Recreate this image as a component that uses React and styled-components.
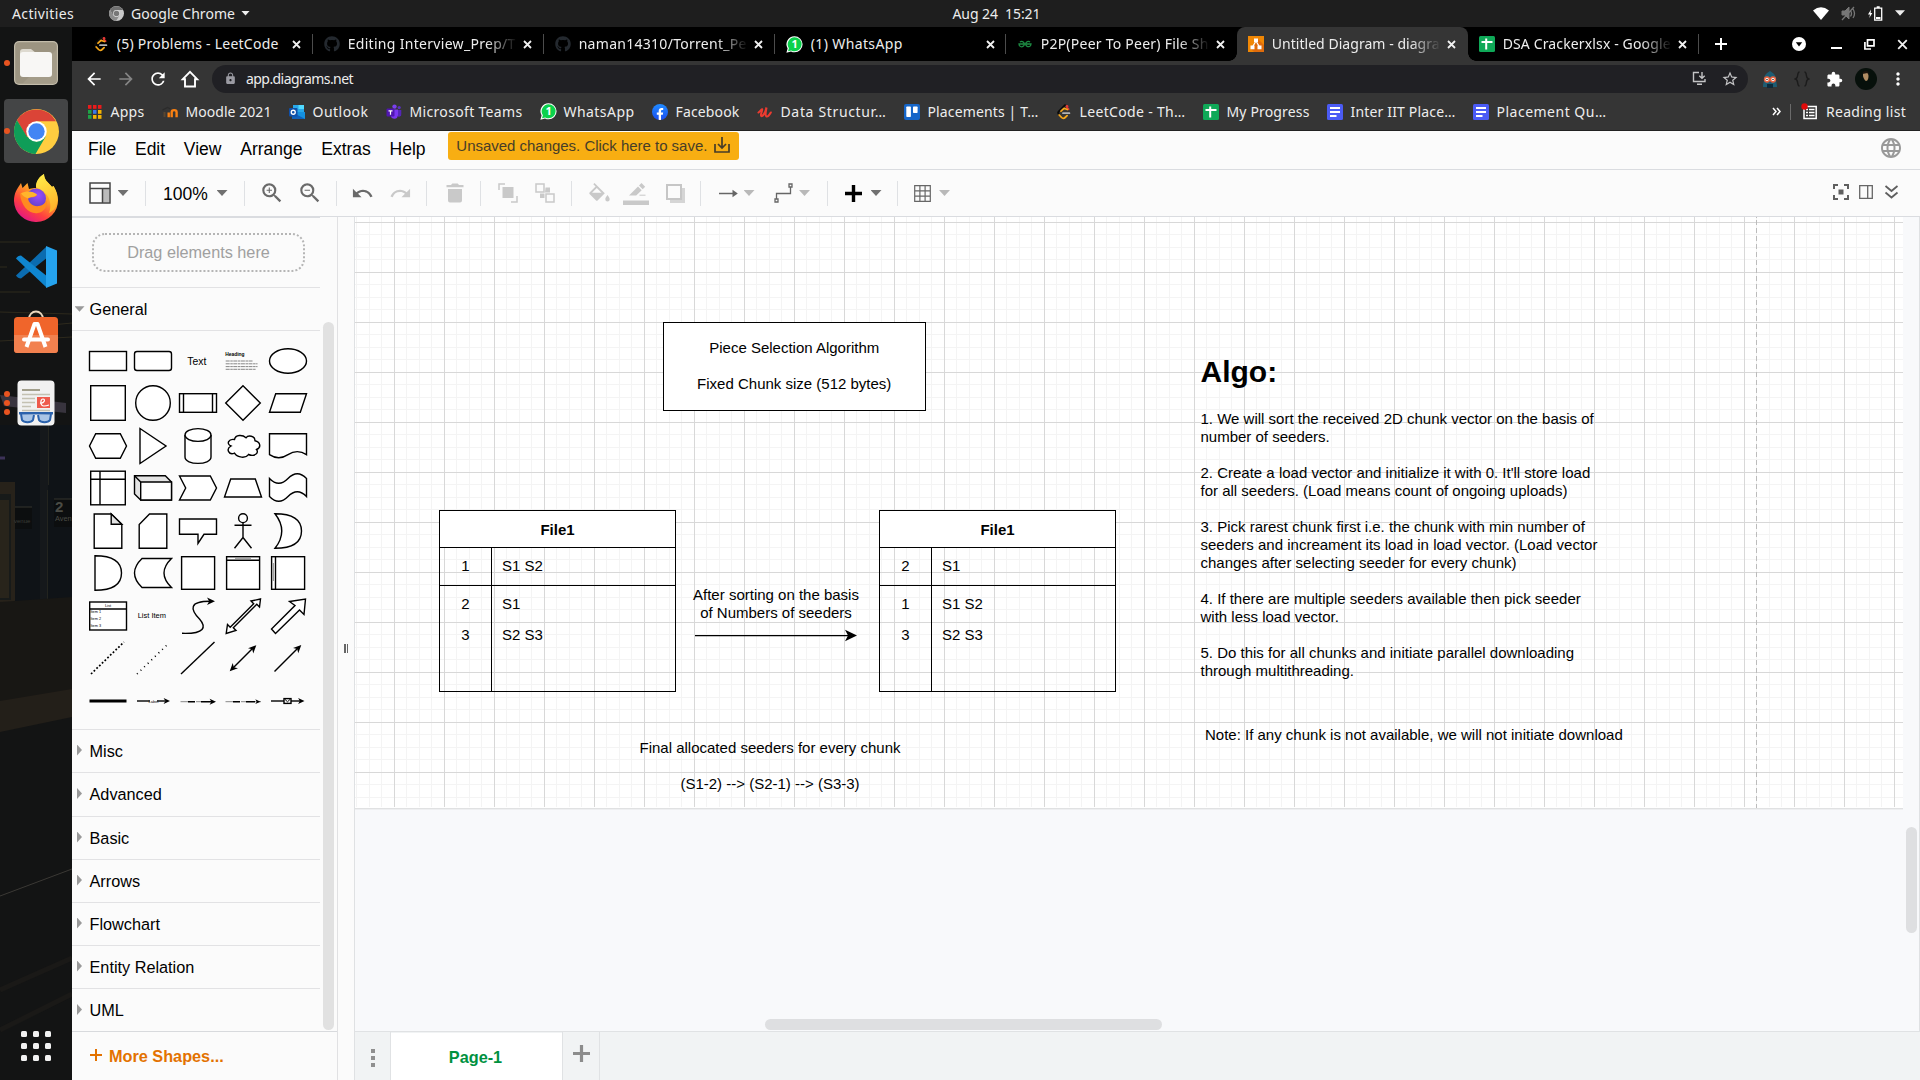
import React, { useLayoutEffect, useRef } from "react";
import styled, { createGlobalStyle, css } from "styled-components";
import { FaGithub, FaFacebookF } from "react-icons/fa";
import {
  MdZoomIn,
  MdZoomOut,
  MdUndo,
  MdRedo,
  MdLock,
  MdStarBorder,
  MdExtension,
  MdMoreVert,
  MdArrowBack,
  MdArrowForward,
  MdRefresh,
  MdLanguage,
} from "react-icons/md";

const Global = createGlobalStyle`
  * { box-sizing: border-box; }
  body { margin: 0; background: #131313; overflow: hidden; }
  svg { display: block; flex: none; }
`;

const uiFont = `"Noto Sans", "Open Sans", sans-serif`;
const appFont = `"Liberation Sans", Arial, sans-serif`;

/* ---------- shared ---------- */

const LabelBox = styled.span`
  flex: none;
  overflow: visible;
  white-space: pre;
  width: ${(p) => p.$w}px;
`;

function Label({ w, children }) {
  const ref = useRef(null);
  useLayoutEffect(() => {
    const el = ref.current;
    el.style.letterSpacing = "0px";
    const natural = el.getBoundingClientRect().width;
    el.style.letterSpacing = `${(w - natural) / children.length}px`;
  }, [w, children]);
  return (
    <LabelBox $w={w}>
      <span ref={ref}>{children}</span>
    </LabelBox>
  );
}

const Caret = styled.i`
  flex: none;
  width: ${(p) => p.$s || 11}px;
  height: ${(p) => (p.$s || 11) / 2 + 0.5}px;
  background: ${(p) => p.$c || "#707070"};
  clip-path: polygon(0 0, 100% 0, 50% 100%);
  margin-left: ${(p) => p.$ml || 0}px;
`;

/* ---------- desktop ---------- */

const Desktop = styled.div`
  width: 1920px;
  height: 1080px;
  display: flex;
  flex-direction: column;
  overflow: hidden;
  font-family: ${uiFont};
`;

const TopBar = styled.header`
  height: 27px;
  flex: none;
  background: #1e1e1e;
  color: #ececec;
  font-size: 14px;
  display: grid;
  grid-template-columns: 952.5px 1fr auto;
  align-items: center;
  line-height: 25px;
  padding-bottom: 1px;
`;
const TopLeft = styled.div`
  display: flex;
  align-items: center;
  padding-left: 12px;
`;
const TopGap = styled.span`
  width: ${(p) => p.$w}px;
  flex: none;
`;
const Tray = styled.div`
  display: flex;
  align-items: center;
  gap: 12px;
  padding-right: 15px;
`;

const Below = styled.div`
  display: flex;
  flex: 1;
  min-height: 0;
`;

const Dock = styled.nav`
  width: 72px;
  flex: none;
  position: relative;
  display: flex;
  flex-direction: column;
  align-items: center;
  gap: 4px;
  padding-top: 4px;
  background: #131414;
`;
const Wallpaper = styled.svg`
  position: absolute;
  inset: 0;
`;
const Slot = styled.div`
  position: relative;
  width: 64px;
  height: 64px;
  flex: none;
  display: grid;
  place-items: center;
  border-radius: 4px;
  padding-bottom: ${(p) => p.$lift || 0}px;
  background: ${(p) => (p.$active ? "#444546" : "transparent")};
`;
const Dots = styled.div`
  position: absolute;
  left: 0;
  top: 0;
  bottom: 0;
  display: flex;
  flex-direction: column;
  justify-content: center;
  gap: 3px;
`;
const Dot = styled.i`
  width: 6px;
  height: 6px;
  border-radius: 50%;
  background: #e95420;
`;
const AppsGrid = styled.div`
  position: relative;
  margin-top: auto;
  margin-bottom: 19px;
  display: grid;
  grid-template-columns: repeat(3, 6px);
  grid-auto-rows: 6px;
  gap: 6px;
`;
const AppsDot = styled.i`
  border-radius: 1.5px;
  background: #f2f2f2;
`;

/* ---------- chrome ---------- */

const Window = styled.main`
  flex: 1;
  min-width: 0;
  display: flex;
  flex-direction: column;
  color: #ededed;
`;
const TabStrip = styled.div`
  height: 34px;
  flex: none;
  background: #000;
  display: flex;
  padding-left: 9.7px;
  font-size: 14px;
  line-height: 34px;
`;
const flare = (side) => css`
  content: "";
  position: absolute;
  bottom: 0;
  ${side}: -8px;
  width: 8px;
  height: 8px;
  background: radial-gradient(circle at ${side} top, #000 7.5px, #353535 8px);
`;
const TabBox = styled.div`
  position: relative;
  width: 231px;
  flex: none;
  display: flex;
  align-items: center;
  padding-left: 11.5px;
  ${(p) =>
    p.$active &&
    css`
      background: #353535;
      border-radius: 8px 8px 0 0;
      &::before {
        ${flare("left")}
      }
      &::after {
        ${flare("right")}
      }
    `}
`;
const TabText = styled.div`
  margin-left: 7.5px;
  width: 170px;
  margin-right: 5.5px;
  height: 34px;
  overflow: hidden;
  ${(p) => p.$fade && "mask-image: linear-gradient(90deg, #000 138px, transparent 169px);"}
`;
const TabEdge = styled.i`
  margin-left: auto;
  width: 1px;
  height: 20px;
  background: #4c4c4c;
`;
const StripGap = styled.span`
  width: ${(p) => p.$w}px;
  flex: none;
`;
const StripIcons = styled.div`
  flex: 1;
  display: flex;
  align-items: center;
`;
const Toolbar = styled.div`
  height: 36px;
  flex: none;
  background: #353535;
  display: flex;
  align-items: center;
  padding-left: 12px;
  font-size: 14px;
`;
const NavIcons = styled.div`
  display: flex;
  gap: 12px;
`;
const Omnibox = styled.div`
  margin-left: 12px;
  width: 1536px;
  height: 28px;
  border-radius: 14px;
  background: #202024;
  display: flex;
  align-items: center;
  padding: 0 9px 1px 12px;
  gap: 9px;
  line-height: 26px;
`;
const OmniRight = styled.div`
  margin-left: auto;
  display: flex;
  align-items: center;
  gap: 14px;
  color: #c4c4c6;
`;
const ExtIcons = styled.div`
  display: flex;
  align-items: center;
  margin-left: 13px;
`;
const ExtSlot = styled.div`
  width: 32px;
  display: grid;
  place-items: center;
  margin-left: ${(p) => p.$ml || 0}px;
`;
const Bookmarks = styled.div`
  height: 34px;
  flex: none;
  background: #353535;
  border-bottom: 1px solid #222;
  display: flex;
  align-items: center;
  gap: 17px;
  padding: 0 14px 4px 14.5px;
  font-size: 14px;
`;
const Bookmark = styled.div`
  display: flex;
  align-items: center;
  gap: 8px;
  line-height: 26px;
`;
const BookmarkEnd = styled.div`
  margin-left: auto;
  display: flex;
  align-items: center;
`;
const BarEdge = styled.i`
  width: 1px;
  height: 16px;
  background: #6b6b6b;
  margin: 0 10px 0 9px;
`;

/* ---------- editor ---------- */

const Editor = styled.section`
  flex: 1;
  min-height: 0;
  display: flex;
  flex-direction: column;
  background: #fbfbfb;
  color: #000;
  font-family: ${appFont};
`;
const MenuBar = styled.div`
  height: 39px;
  flex: none;
  border-bottom: 1px solid #dadce0;
  display: flex;
  align-items: center;
  padding: 0 17px 2px 16px;
  font-size: 17.5px;
`;
const MenuItem = styled.span`
  margin-right: 18.75px;
`;
const SaveBanner = styled.div`
  align-self: flex-start;
  margin: 1px 0 0 4px;
  width: 291px;
  height: 28px;
  border-radius: 3px;
  background: #f8ae12;
  color: #473d28;
  font-size: 15px;
  display: flex;
  align-items: center;
  padding: 0 0 2px 8px;
  gap: 7px;
`;
const GlobeSlot = styled.span`
  margin-left: auto;
  margin-top: -2px;
  color: #999;
`;
const ToolRow = styled.div`
  height: 47px;
  flex: none;
  border-bottom: 1px solid #dadce0;
  display: flex;
  align-items: center;
  padding-right: 21.5px;
`;
const Sep = styled.i`
  flex: none;
  width: 1px;
  height: 25px;
  background: #dfe1e4;
  margin-left: ${(p) => p.$ml}px;
`;
const Tool = styled.span`
  flex: none;
  width: ${(p) => p.$w}px;
  margin-left: ${(p) => p.$ml}px;
  color: ${(p) => (p.$off ? "#c9c9c9" : "#6a6a6a")};
`;
const ZoomText = styled.span`
  flex: none;
  width: 46px;
  margin-left: 17px;
  margin-top: 2px;
  font-size: 17.5px;
`;
const ToolEnd = styled.div`
  margin-left: auto;
  display: flex;
  align-items: center;
  gap: 10.5px;
  padding-bottom: 2px;
`;
const Work = styled.div`
  flex: 1;
  min-height: 0;
  display: flex;
`;
const Sidebar = styled.aside`
  width: 266px;
  flex: none;
  border-right: 1px solid #e1e1e3;
  display: flex;
  flex-direction: column;
`;
const SideScroll = styled.div`
  height: 814px;
  display: flex;
  font-size: 16.25px;
`;
const SideList = styled.div`
  width: 248px;
  flex: none;
`;
const ScrollTrack = styled.div`
  padding: 105px 0 1px 3px;
  display: flex;
`;
const ScrollThumb = styled.i`
  width: 11px;
  border-radius: 6px;
  background: #e1e1e1;
`;
const DropZone = styled.div`
  height: 71px;
  border-top: 1px solid #dadce0;
  border-bottom: 1px solid #e2e2e4;
  padding: 15px 15px 0 20px;
`;
const DropBox = styled.div`
  height: 39px;
  border: 2px dotted #b5b5b5;
  border-radius: 13px;
  color: #a0a0a0;
  display: grid;
  place-items: center;
  line-height: 32px;
  padding-bottom: 2px;
`;
const Section = styled.div`
  height: ${(p) => p.$h}px;
  border-bottom: ${(p) => (p.$last ? "none" : "1px solid #e2e2e4")};
  display: flex;
  align-items: center;
  padding-left: ${(p) => (p.$open ? 2.5 : 5)}px;
  gap: ${(p) => (p.$open ? 5 : 7.5)}px;
`;
const SideArrow = styled.i`
  width: 5px;
  height: 11px;
  background: #999;
  clip-path: polygon(0 0, 100% 50%, 0 100%);
  margin-top: -2px;
`;
const Palette = styled.div`
  height: 399px;
  border-bottom: 1px solid #e2e2e4;
  padding: 8.4px 0 0 13.3px;
  display: grid;
  grid-template-columns: repeat(5, 45px);
  grid-auto-rows: 42.5px;
  place-items: center;
  align-content: start;
  justify-content: start;
`;
const MoreShapes = styled.div`
  flex: 1;
  border-top: 1px solid #d8dadd;
  display: flex;
  align-items: center;
  padding-left: 18px;
  gap: 7px;
  color: #e37200;
  font-size: 16.25px;
  font-weight: bold;
  line-height: 49px;
`;
const PlusSlot = styled.span`
  margin-top: -3px;
`;
const Splitter = styled.div`
  width: 17px;
  flex: none;
  border-right: 1px solid #dfe1e3;
  display: flex;
  align-items: center;
  justify-content: center;
  gap: 1px;
`;
const Grip = styled.i`
  width: 1.5px;
  height: 9px;
  background: #666;
`;
const Stage = styled.div`
  flex: 1;
  min-width: 0;
  display: flex;
  flex-direction: column;
`;
const Canvas = styled.div`
  position: relative;
  height: 814px;
  flex: none;
  background: #f8f9fb;
  border-right: 1px solid #dfe1e3;
`;
const gridStops = `
  #d8d8d8 0 1px, transparent 1px 12px,
  #f4f4f4 12px 13px, transparent 13px 25px,
  #f4f4f4 25px 26px, transparent 26px 37px,
  #f4f4f4 37px 38px, transparent 38px 50px`;
const Page = styled.div`
  width: 1548px;
  height: 590px;
  background-color: #fff;
  background-image: linear-gradient(#d8d8d8 0 1px, transparent 1px),
    linear-gradient(90deg, ${gridStops}), linear-gradient(${gridStops});
  background-size: 50px 50px;
  background-position: 39px 5px;
  box-shadow: 0 1px 0 #fff, 0 2px 0 #e0e1e2, 0 3px 0 #eeeff1;
`;
const PageBreak = styled.div`
  position: absolute;
  left: 1401px;
  top: 0;
  width: 1px;
  height: 591px;
  background: repeating-linear-gradient(#bcbcbc 0 5px, transparent 5px 8px);
  background-position: 0 3px;
`;
const VThumb = styled.i`
  position: absolute;
  right: 2px;
  top: 610px;
  width: 11px;
  height: 106px;
  border-radius: 6px;
  background: #dedfe1;
`;
const HThumb = styled.i`
  position: absolute;
  left: 410px;
  top: 802px;
  width: 397px;
  height: 11px;
  border-radius: 6px;
  background: #dedfe1;
`;
const Node = styled.div`
  position: absolute;
  left: ${(p) => p.$x}px;
  top: ${(p) => p.$y}px;
  width: ${(p) => p.$w}px;
  font-size: 15px;
  line-height: 18px;
  text-align: ${(p) => p.$align || "left"};
  white-space: pre;
`;
const BoxNode = styled(Node)`
  height: 89px;
  border: 1.25px solid #000;
  background: #fff;
  padding-top: 16px;
`;
const AlgoTitle = styled.h1`
  margin: 0 0 20px;
  font-size: 30px;
  line-height: 36px;
`;
const TableNode = styled.div`
  position: absolute;
  left: ${(p) => p.$x}px;
  top: 293px;
  width: 237px;
  height: 182px;
  border: 1.25px solid #000;
  font-size: 15px;
  line-height: 18px;
  display: flex;
  flex-direction: column;
`;
const TableHead = styled.div`
  height: 37px;
  flex: none;
  background: #fff;
  border-bottom: 1px solid #000;
  font-weight: bold;
  text-align: center;
  line-height: 38px;
`;
const TableRow = styled.div`
  display: grid;
  grid-template-columns: 52px 1fr;
  height: ${(p) => p.$h}px;
  flex: none;
  border-bottom: ${(p) => (p.$line ? "1px solid #000" : "none")};
`;
const KeyCell = styled.div`
  border-right: 1px solid #000;
  text-align: center;
  padding-top: ${(p) => p.$pt}px;
`;
const ValueCell = styled.div`
  padding: ${(p) => p.$pt}px 0 0 10px;
`;
const ArrowNode = styled.svg`
  position: absolute;
  left: 339px;
  top: 410px;
`;
const PageTabs = styled.div`
  flex: 1;
  background: #f1f3f4;
  border-top: 1px solid #e0e2e4;
  display: flex;
`;
const PageMenu = styled.div`
  width: 36px;
  border-right: 1px solid #e0e2e4;
  display: flex;
  flex-direction: column;
  align-items: center;
  gap: 3px;
  padding-top: 17px;
`;
const MenuDot = styled.i`
  width: 4px;
  height: 4px;
  background: #8f8f8f;
`;
const PageTab = styled.div`
  width: 171px;
  margin-top: 1px;
  background: #fff;
  color: #00913f;
  font-weight: bold;
  font-size: 16.25px;
  line-height: 49px;
  text-align: center;
  padding-right: 2px;
`;
const AddPage = styled.div`
  width: 38px;
  border-left: 1px solid #e0e2e4;
  border-right: 1px solid #e0e2e4;
  padding: 13px 0 0 9.5px;
`;

/* ---------- icon drawings ---------- */

const LeetIcon = () => (
  <svg width="16" height="16" viewBox="0 0 16 16" fill="none" strokeWidth="1.8" strokeLinecap="round">
    <path d="M9 1.2 2.8 7.4c-.8.9-.8 2 0 2.9" stroke="#0a0a0a" />
    <path d="M12.6 5.2 11 3.8" stroke="#e53935" />
    <circle cx="11" cy="2.4" r="1.4" fill="#e53935" />
    <path d="M5 7.2 8 4.4M3.2 11l2.4 2.5c1 1 2.5 1 3.5 0l2-1.8M8.5 4.5l2.8 1" stroke="#f7a81b" />
    <path d="M7 9.2h6.4" stroke="#b3b3b3" />
  </svg>
);
const GitIcon = () => <FaGithub size={16} color="#24292f" />;
const WhatsIcon = () => (
  <svg width="17" height="17" viewBox="0 0 17 17">
    <path d="M8.6.3a8 8 0 0 1 0 16c-1.3 0-2.5-.3-3.6-.9L.4 16.7l1.2-4.3A8 8 0 0 1 8.6 .3z" fill="#fff" />
    <path d="M8.6 1.3a7 7 0 0 1 0 14c-1.3 0-2.4-.3-3.4-.9l-3.2.9.9-3.1A7 7 0 0 1 8.6 1.3z" fill="#0bd14c" />
    <text x="8.6" y="12.3" textAnchor="middle" fontSize="11" fontWeight="700" fontFamily="Noto Sans" fill="#fff">1</text>
  </svg>
);
const GfgIcon = () => (
  <svg width="16" height="16" viewBox="0 0 16 16" fill="none" stroke="#1c8a42" strokeWidth="1.3">
    <path d="M3 6C4.500 4.600 7.300 5.500 7.300 8S5 11.200 3.500 10.500 2 8 2 8h12S13.900 10 12.500 10.500 8.700 10.500 8.700 8 11.500 4.600 13 6" />
  </svg>
);
const DrawIcon = () => (
  <svg width="16" height="16" viewBox="0 0 16 16">
    <path d="M0 0h16v16H0z" fill="#f08705" />
    <path d="M10 3l6 6v7H6l-3-3z" fill="#df6c0c" />
    <path d="M8 5 4.5 11M8 5l3.5 6" stroke="#fff" strokeWidth="1.3" />
    <path d="M6 2.5h4v3.6H6zM2.5 9.5h4v3.8h-4zM9.5 9.5h4v3.8h-4z" fill="#fff" />
  </svg>
);
const SheetIcon = () => (
  <svg width="16" height="16" viewBox="0 0 16 16">
    <rect width="16" height="16" rx="1.5" fill="#0fa958" />
    <path d="M2.5 6h11M7.2 2.5v11" stroke="#fff" strokeWidth="2" />
  </svg>
);
const DocIcon = () => (
  <svg width="16" height="16" viewBox="0 0 16 16">
    <rect width="16" height="16" rx="1.5" fill="#4b5bf5" />
    <path d="M3 4h10M3 8h10M3 12h6.5" stroke="#fff" strokeWidth="1.9" />
  </svg>
);
const AppsIcon = () => (
  <svg width="16" height="16" viewBox="0 0 16 16">
    {["#ea1b1b", "#ea1b1b", "#ea1b1b", "#1ea446", "#3b78e7", "#f5b400", "#1ea446", "#f5b400", "#f5b400"].map((c, i) => (
      <rect key={i} x={1 + (i % 3) * 5} y={1 + Math.floor(i / 3) * 5} width="3.5" height="3.8" fill={c} />
    ))}
  </svg>
);
const MoodleIcon = () => (
  <svg width="16" height="16" viewBox="0 0 16 16" fill="none">
    <path d="M2.5 13V8" stroke="#5a4630" strokeWidth="2" />
    <path d="M.5 6l5-2.500 3 1.500" stroke="#2b2b2b" strokeWidth="1.300" />
    <path d="M6.700 13.200V8.500M9.700 13.200V8.200C9.700 5.400 14.600 5.400 14.600 8.200V13.200" stroke="#f98012" strokeWidth="2.400" />
  </svg>
);
const OutlookIcon = () => (
  <svg width="16" height="16" viewBox="0 0 16 16">
    <path d="M4 1h11v7H4z" fill="#28a8ea" />
    <path d="M9.5 1H15v4H9.5z" fill="#50d9ff" />
    <path d="M3 8h13v7H3z" fill="#1490df" />
    <path d="M3 8l13 7H3z" fill="#0f5fb8" />
    <rect x="0" y="4" width="8.5" height="8.5" rx="1" fill="#0f4fa8" />
    <circle cx="4.25" cy="8.25" r="2" stroke="#fff" strokeWidth="1.3" fill="none" />
  </svg>
);
const TeamsIcon = () => (
  <svg width="16" height="16" viewBox="0 0 16 16">
    <circle cx="8.5" cy="2.6" r="2.2" fill="#7a3ff0" />
    <circle cx="13.2" cy="3.6" r="1.6" fill="#5b2fc4" />
    <path d="M5 5.5h7v6a3.8 3.8 0 0 1-7 1.5z" fill="#7a35f0" />
    <path d="M12 6h3.3v4c0 2.5-2 3.3-3.3 2.5z" fill="#5526b8" />
    <rect x="0.5" y="4.5" width="8" height="8" rx="1" fill="#5016b0" />
    <path d="M2.5 6.8h4M4.5 6.8v4" stroke="#fff" strokeWidth="1.2" />
  </svg>
);
const FbDisc = styled.span`
  width: 16px;
  height: 16px;
  border-radius: 50%;
  background: linear-gradient(#1f8bff, #1b4df0);
  overflow: hidden;
  display: grid;
  place-items: end center;
`;
const FbIcon = () => (
  <FbDisc>
    <FaFacebookF size={12} color="#fff" />
  </FbDisc>
);
const UdemyIcon = () => (
  <svg width="16" height="16" viewBox="0 0 16 16" fill="none" stroke="#ec3b30" strokeWidth="2.1" strokeLinecap="round">
    <path d="M1.500 8.500C3.500 7 4.600 5 5.200 5.300S3 11 4.200 12 8.500 9 9.500 3.500C8.600 8 8 11.500 9.300 12.300s3-1.300 4.500-3.800" />
  </svg>
);
const TrelloIcon = () => (
  <svg width="16" height="16" viewBox="0 0 16 16">
    <rect width="16" height="16" rx="2" fill="#1565c8" />
    <rect x="2.3" y="2.5" width="4.6" height="10.5" rx=".7" fill="#fff" />
    <rect x="9" y="2.5" width="4.6" height="6.5" rx=".7" fill="#fff" />
  </svg>
);
const CloseIcon = ({ s = 9, c = "#f1f1f1", sw = 1.8 }) => (
  <svg width={s} height={s} viewBox="0 0 9 9">
    <path d="M1 1l7 7M8 1 1 8" stroke={c} strokeWidth={sw} />
  </svg>
);
const ChromeGlyph = ({ size, mono }) => {
  const c = mono ? ["#6f6f6f", "#8c8c8c", "#c9c9c9", "#777"] : ["#db4437", "#0f9d58", "#ffcd40", "#4285f4"];
  return (
    <svg width={size} height={size} viewBox="0 0 44 44">
      <circle cx="22" cy="22" r="22" fill={c[2]} />
      <path d="M2.9 11A22 22 0 0 1 41.1 12H22L12.5 27.5z" fill={c[0]} />
      <path d="M2.95 11A22 22 0 0 0 21 44l10-17L22 32l-9.5-5z" fill={c[1]} />
      <circle cx="22" cy="22" r="10" fill={mono ? "#ddd" : "#fff"} />
      <circle cx="22" cy="22" r="8" fill={c[3]} />
    </svg>
  );
};
const FilesIcon = () => (
  <svg width="44" height="44" viewBox="0 0 44 44">
    <rect width="44" height="44" rx="5" fill="#c3bcaa" />
    <rect x="1.2" y="1.2" width="41.6" height="41.6" rx="4" fill="#9c9481" />
    <path d="M43 8 8 43h30a5 5 0 0 0 5-5z" fill="#aaa28f" opacity=".6" />
    <path d="M6 11a3 3 0 0 1 3-3h8l5 4v6H6z" fill="#dedad0" />
    <rect x="6" y="11" width="32" height="25" rx="3" fill="#f8f7f5" />
  </svg>
);
const FirefoxIcon = () => (
  <svg width="46" height="48" viewBox="0 0 46 48">
    <defs>
      <linearGradient id="ffBody" x1=".8" y1=".1" x2=".25" y2="1">
        <stop offset="0" stopColor="#ffe23c" />
        <stop offset=".4" stopColor="#ff9a26" />
        <stop offset=".7" stopColor="#ff4040" />
        <stop offset="1" stopColor="#e0128a" />
      </linearGradient>
      <radialGradient id="ffCore" cx=".6" cy=".35" r=".7">
        <stop offset="0" stopColor="#9b4bff" />
        <stop offset="1" stopColor="#5b3fc0" />
      </radialGradient>
      <linearGradient id="ffFlame" x1="0" y1="0" x2=".3" y2="1">
        <stop offset="0" stopColor="#fff04a" />
        <stop offset="1" stopColor="#ffb52c" />
      </linearGradient>
    </defs>
    <path d="M1 27C1 19 4 15 8 9l1.500 5 5-5 1.500 6c3-1 5-1 7-1 0-6 3-11 8-14 0 6 4 8 8 13l1.500-1C44 18 45 22 45 26a22 21.500 0 0 1-44 1z" fill="url(#ffBody)" />
    <path d="M23 13C23 7 26 3 31 0c0 6 4 8 8 13l1.500-1C44 18 45 23 44 29c-1 5-4 8-8 10 3-7 1-16-4-20-3-3-6-4-9-6z" fill="url(#ffFlame)" />
    <circle cx="23" cy="24.500" r="10" fill="url(#ffCore)" />
    <path d="M7 19.500c4-2.500 12-2.500 17 1.500-2 3-6 1.500-9 3.500.5 4 5 8.500 11 7.500 4-.7 7-3 8-6 1 6-3 12-9 13-9 1.500-17-7-18-19.500z" fill="#ff8a20" />
    <path d="M8 19.500c5-3 12-2.500 16 1-2 3-7 1.500-9 4-3-1-5.500-3-7-5z" fill="#ffb52c" />
  </svg>
);
const CodeIcon = () => (
  <svg width="43" height="42" viewBox="0 0 43 42">
    <path d="M1 29.5 31 1l2 10-27 21.500c-2 0-4-1-5-3z" fill="#0b6cb0" />
    <path d="M1 12.5c1-2 3-3 5-3L33 31l-2 10z" fill="#0f86d0" />
    <path d="M31 0l11 4.500v33L31 42z" fill="#25a3ee" />
  </svg>
);
const SoftwareIcon = () => (
  <svg width="44" height="44" viewBox="0 0 44 44">
    <path d="M15 9a7 7.500 0 0 1 14 0" fill="none" stroke="#e9d7bf" strokeWidth="1.8" />
    <rect y="7" width="44" height="36" rx="3.5" fill="#f0652b" />
    <path d="M0 25h44v14.500a3.5 3.5 0 0 1-3.5 3.5h-37A3.5 3.5 0 0 1 0 39.500z" fill="#f2814f" />
    <path d="M12.500 37 20.500 14h3L31.500 37" stroke="#fff" strokeWidth="4" fill="none" strokeLinejoin="round" />
    <path d="M10 29.5h24" stroke="#fff" strokeWidth="4" strokeLinecap="round" />
  </svg>
);
const ReaderIcon = () => (
  <svg width="38" height="46" viewBox="0 0 38 46">
    <rect x=".5" y=".5" width="37" height="45" rx="4" fill="#f1f1f1" />
    <path d="M5 10h18" stroke="#a29f8c" strokeWidth="2" />
    <path d="M5 14.5h28M5 18.5h13M5 22.5h13M5 26.5h9M5 30.5h28" stroke="#c4c1b2" strokeWidth="1.7" />
    <rect x="20" y="17" width="13" height="11" fill="#ee5a4c" />
    <path d="M23 23c4 1 6-4 3-4s-3 7 1 7 4-1 5-1" stroke="#fff" strokeWidth="1.2" fill="none" />
    <path d="M2 33h34M4 34l1 6c2 3 9 3 11 0l1-5M34 34l-1 6c-2 3-9 3-11 0l-1-5" stroke="#2b62ac" strokeWidth="2" fill="#a9c5e6" />
    <path d="M2 33.5h34" stroke="#2b62ac" strokeWidth="2.2" />
  </svg>
);
const WallpaperArt = () => (
  <Wallpaper width="72" height="1053" viewBox="0 27 72 1053">
    <rect y="27" width="72" height="1053" fill="#131414" />
    <path d="M0 242h30M0 292h30M0 267h7M0 312l72 2M0 341l72-4M20 328l52-5" stroke="#2e2a1d" strokeWidth="1" />
    <path d="M0 395l66 8v10L4 406z" fill="#38343e" />
    <rect y="425" width="72" height="177" fill="#0f1317" />
    <rect x="40" y="425" width="8" height="177" fill="#15181b" />
    <path d="M48.5 425v60M47.5 490v110" stroke="#23241f" />
    <path d="M0 458h5" stroke="#3c3258" strokeWidth="3" />
    <path d="M0 482h15v120H0z" fill="#27221a" />
    <path d="M0 494h11v106H0z" fill="#171a19" />
    <path d="M0 500h9v98H0z" fill="#28241b" />
    <rect x="15" y="507" width="17" height="22" fill="#0c0e0f" />
    <rect x="54" y="499" width="18" height="28" fill="#0c0e0f" />
    <path d="M15 507h17M54 499h18" stroke="#34352f" />
    <text x="55" y="512" fontSize="15" fontWeight="700" fontFamily="Liberation Sans" fill="#4a4b45">2</text>
    <text x="55" y="520.5" fontSize="7.4" fontFamily="Liberation Sans" fill="#4a4b45">Aven</text>
    <text x="14" y="523" fontSize="6" fontFamily="Liberation Sans" fill="#3c3d37">venue</text>
    <path d="M0 602l72-5v110H0z" fill="#181714" />
    <path d="M0 701l72-12v28L0 732z" fill="#231f19" />
    <path d="M0 896l72-27" stroke="#3b3935" />
    <path d="M0 990l72-32M0 1030l72-36" stroke="#1a1917" strokeWidth="5" />
  </Wallpaper>
);

/* ---------- shape palette ---------- */

const Shape = ({ children }) => (
  <svg width="40" height="40" viewBox="-20 -20 40 40" fill="#fff" stroke="#000" strokeWidth="1.4">
    {children}
  </svg>
);
const T = ({ x = 0, y, s, b, a = "middle", children }) => (
  <text x={x} y={y} fontSize={s} fontWeight={b ? 700 : 400} textAnchor={a} fontFamily="Liberation Sans" fill="#000" stroke="none">
    {children}
  </text>
);
const Head = ({ x, y, r = 0, s = 1 }) => (
  <path d="M0 0-8-3.700-5.800 0-8 3.700z" fill="#000" stroke="none" transform={`translate(${x} ${y}) rotate(${r}) scale(${s})`} />
);
const shapes = [
  <rect x="-18.5" y="-9.5" width="37" height="19" />,
  <rect x="-18.5" y="-9.5" width="37" height="19" rx="2.5" />,
  <T x={-1.2} y={3.5} s={10.4}>Text</T>,
  <>
    <T x={-17.8} y={-5.5} s={4.9} b a="start">Heading</T>
    <path d="M-17.3 0H10M-17.3 2.8H14.5M-17.3 5.6H14.5M-17.3 8.3H13" stroke="#555" strokeWidth=".7" strokeDasharray="4 .6 2.5 .5" />
  </>,
  <ellipse rx="18.5" ry="12.3" />,
  <rect x="-17.3" y="-17.3" width="34.6" height="34.6" />,
  <circle r="17.3" />,
  <>
    <rect x="-18.5" y="-9.3" width="37" height="18.6" />
    <path d="M-14.5-9.3V9.3M14.5-9.3V9.3" />
  </>,
  <path d="M0-17.3 17.3 0 0 17.3-17.3 0z" />,
  <path d="M-12.3-9.3H18.5L12.3 9.3H-18.5z" />,
  <path d="M-12.3-12.3H12.3L18.5 0 12.3 12.3H-12.3L-18.5 0z" />,
  <path d="M-13-17.5 13 0-13 17.5z" />,
  <>
    <path d="M-13-11V11C-13 19.5 13 19.5 13 11V-11" />
    <ellipse cy="-11" rx="13" ry="6.4" />
  </>,
  <path d="M-8.500-6.500C-14.500-7.500-17-2-12 0-17.500 3-14 9.500-8.500 7.200-5.500 12 3 12.500 5.500 8.500 11 11 16.500 7 13.500 3.500 18.500 1.500 17.500-4 12-5.200 12-10.500 5-11 3-8.200-.5-11.500-7.500-11.500-8.500-6.500z" />,
  <path d="M-18.5-12.3H18.5V8.7Q9.3 2.5 0 8.7T-18.5 8.7z" />,
  <>
    <rect x="-17.3" y="-16.8" width="34.6" height="33.6" />
    <path d="M-8-16.8V16.8M-17.3-8.7H17.3" />
  </>,
  <>
    <path d="M-18.5-12.3H12.3L18.5-6V12H-12.3L-18.5 6z" fill="#e3e3e3" />
    <path d="M-12.3-6H18.5V12H-12.3zM-18.5-12.3l6.2 6.3" />
  </>,
  <path d="M-18.5-12H12.3L18.5 0 12.3 12H-18.5L-12.3 0z" />,
  <path d="M-12.3-9H12.3L18.5 9H-18.5z" />,
  <path d="M-18.5-9.5Q-9.3 0 0-9.5T18.5-9.5V8.5Q9.3-1 0 8.5T-18.5 8.5z" />,
  <>
    <path d="M-13.8-17H3.2L13.8-6.7V17.3H-13.8z" />
    <path d="M3.2-17V-6.7H13.8z" fill="#e3e3e3" />
  </>,
  <path d="M-3.5-17H13.8V17.3H-13.8V-6.5z" />,
  <path d="M-18.5-12H18.5V3.3H6L0 12.5V3.3H-18.5z" />,
  <>
    <circle cy="-12.8" r="4.4" />
    <path d="M0-8.4V6.5M-8.5-5.7H8.5M0 6.5-8.5 17.3M0 6.5 8.5 17.3" fill="none" />
  </>,
  <path d="M-13-17.3Q13.5-17.3 13.5 0T-13 17.3Q.5 0-13-17.3z" />,
  <path d="M-13-17.3Q13.5-17.3 13.5 0T-13 17.3z" />,
  <path d="M-11-14.5H18.5Q3.5 0 18.5 14.5H-11Q-26 0-11-14.5z" />,
  <rect x="-16.4" y="-16.3" width="33" height="32.6" />,
  <>
    <rect x="-16.4" y="-16.3" width="33" height="32.6" />
    <path d="M-16.4-12.7H16.6" />
    <path d="M-8-14.7H8" stroke="#777" strokeWidth=".8" />
  </>,
  <>
    <rect x="-16.4" y="-16.3" width="33" height="32.6" />
    <path d="M-12.5-16.3V16.3" />
    <path d="M-14.6-10V8" stroke="#777" strokeWidth=".8" />
  </>,
  <>
    <rect x="-18.3" y="-14" width="36.8" height="28" />
    <path d="M-18.3-7H18.5" />
    <T y={-9.2} s={4}>List</T>
    <T x={-17.5} y={-3.4} s={3.8} a="start">Item 1</T>
    <T x={-17.5} y={3.6} s={3.8} a="start">Item 2</T>
    <T x={-17.5} y={10.6} s={3.8} a="start">Item 3</T>
  </>,
  <T x={-1.2} y={2.2} s={7.5}>List Item</T>,
  <>
    <path d="M-16 17.3C7 18 8.5 11 1.5 3-8 -7-9-14.7 12-14.7" fill="none" />
    <Head x={17} y={-14.7} />
  </>,
  <path d="M17.500-17 16.500-9 13.800-11.700-9.700 11.800-7 14.500-16.800 17.500-15.500 8.500-12.800 11.200 10.700-12.300 8-15z" />,
  <path d="M17.500-17 16-1.500 11.500-6-12.500 17.500-16.500 13 7-10.500 1.500-14.500z" />,
  <path d="M-17 16 16-16" strokeDasharray="1.8 2" strokeWidth="1.7" />,
  <path d="M-16 16 16-15" strokeDasharray="1 4" strokeWidth="1.6" />,
  <path d="M-17 16 16.5-16" />,
  <>
    <path d="M-10 10 10-10" />
    <Head x={13.3} y={-12.8} r={-45} />
    <Head x={-13.3} y={13.3} r={135} />
  </>,
  <>
    <path d="M-13.5 13.5 10-10" />
    <Head x={13.3} y={-13} r={-45} />
  </>,
  <path d="M-18.5 0H18.5" strokeWidth="3.2" />,
  <>
    <path d="M-16 0H12" />
    <rect x="-3" y="-2" width="7" height="4" fill="#fbfbfb" stroke="none" />
    <T x={0.5} y={1.6} s={4}>Label</T>
    <Head x={17} y={0} s={0.8} />
  </>,
  <>
    <path d="M-10 .7H-3M3 .7H14" />
    <path d="M-17.500 .7H-10M-2 .7H3" stroke="#888" strokeWidth="1" />
    <Head x={18} y={0.7} s={0.8} />
  </>,
  <>
    <path d="M-10 .7H-3M3 .7H12" />
    <path d="M-17.500 .7H-10M-2 .7H3M12 .7H18" stroke="#888" strokeWidth="1" />
    <Head x={17.5} y={0.7} s={0.65} />
  </>,
  <>
    <path d="M-17 0H12" />
    <rect x="-4" y="-2.4" width="7" height="4.8" />
    <path d="M-3-1.6 -.5.8 2-1.6" fill="none" strokeWidth="1" />
    <Head x={16.5} y={0} s={0.8} />
  </>,
];

/* ---------- data ---------- */

const tabs = [
  { icon: LeetIcon, text: "(5) Problems - LeetCode", w: 162, edge: true },
  { icon: GitIcon, text: "Editing Interview_Prep/T", w: 168, fade: true, edge: true },
  { icon: GitIcon, text: "naman14310/Torrent_Pe", w: 168, fade: true, edge: true },
  { icon: WhatsIcon, text: "(1) WhatsApp", w: 92, edge: true },
  { icon: GfgIcon, text: "P2P(Peer To Peer) File Sh", w: 168, fade: true },
  { icon: DrawIcon, text: "Untitled Diagram - diagra", w: 168, fade: true, active: true },
  { icon: SheetIcon, text: "DSA Crackerxlsx - Google", w: 168, fade: true, edge: true },
];

const bookmarks = [
  [AppsIcon, "Apps", 34],
  [MoodleIcon, "Moodle 2021", 86],
  [OutlookIcon, "Outlook", 56],
  [TeamsIcon, "Microsoft Teams", 113],
  [WhatsIcon, "WhatsApp", 71],
  [FbIcon, "Facebook", 64],
  [UdemyIcon, "Data Structur…", 106],
  [TrelloIcon, "Placements | T…", 111],
  [LeetIcon, "LeetCode - Th…", 106],
  [SheetIcon, "My Progress", 83],
  [DocIcon, "Inter IIT Place…", 105],
  [DocIcon, "Placement Qu…", 110],
];

const sections = [
  ["Misc", 43],
  ["Advanced", 44],
  ["Basic", 43],
  ["Arrows", 43],
  ["Flowchart", 43],
  ["Entity Relation", 43],
  ["UML", 43],
];

const algo = `1. We will sort the received 2D chunk vector on the basis of
number of seeders.

2. Create a load vector and initialize it with 0. It'll store load
for all seeders. (Load means count of ongoing uploads)

3. Pick rarest chunk first i.e. the chunk with min number of
seeders and increament its load in load vector. (Load vector
changes after selecting seeder for every chunk)

4. If there are multiple seeders available then pick seeder
with less load vector.

5. Do this for all chunks and initiate parallel downloading
through multithreading.`;

const rowHeights = [38, 32, 73];

function FileTable({ x, rows }) {
  return (
    <TableNode $x={x}>
      <TableHead>File1</TableHead>
      {rows.map(([k, v], i) => (
        <TableRow key={k} $h={rowHeights[i]} $line={i === 0}>
          <KeyCell $pt={i === 2 ? 8 : 9}>{k}</KeyCell>
          <ValueCell $pt={i === 2 ? 8 : 9}>{v}</ValueCell>
        </TableRow>
      ))}
    </TableNode>
  );
}

function BrowserChrome() {
  return (
    <>
      <TabStrip>
        {tabs.map(({ icon: Icon, text, w, fade, edge, active }) => (
          <TabBox key={text} $active={active}>
            <Icon />
            <TabText $fade={fade}>
              <Label w={w}>{text}</Label>
            </TabText>
            <CloseIcon />
            {edge && <TabEdge />}
          </TabBox>
        ))}
        <StripIcons>
          <StripGap $w={16} />
          <svg width="12" height="12" viewBox="0 0 12 12"><path d="M6 0v12M0 6h12" stroke="#fff" strokeWidth="2" /></svg>
          <StripGap $w={65} />
          <svg width="14" height="14" viewBox="0 0 14 14"><circle cx="7" cy="7" r="7" fill="#fff" /><path d="M3.8 5.3h6.4L7 9.6z" fill="#000" /></svg>
          <StripGap $w={25} />
          <svg width="11" height="14" viewBox="0 0 11 14"><path d="M0 11h11" stroke="#fff" strokeWidth="2" /></svg>
          <StripGap $w={22} />
          <svg width="11" height="11" viewBox="0 0 11 11" fill="none" stroke="#fff" strokeWidth="1.7"><path d="M3.5 .9H10v6H3.5zM.9 3v7H7" /></svg>
          <StripGap $w={22} />
          <CloseIcon s={11} sw={1.5} />
        </StripIcons>
      </TabStrip>
      <Toolbar>
        <NavIcons>
          <MdArrowBack size={20} color="#fff" />
          <MdArrowForward size={20} color="#858585" />
          <MdRefresh size={20} color="#fff" />
          <svg width="20" height="20" viewBox="0 0 20 20" fill="none" stroke="#fff" strokeWidth="1.9"><path d="M2.8 10.200 10 2.800l7.200 7.400H15v7.300H5v-7.300z" /></svg>
        </NavIcons>
        <Omnibox>
          <MdLock size={13} color="#9a9aa2" />
          <Label w={107}>app.diagrams.net</Label>
          <OmniRight>
            <svg width="15" height="15" viewBox="0 0 15 15" fill="none" stroke="currentColor" strokeWidth="1.4"><path d="M7 1.500H1.500v9h11.500V8M5 13.200h5M10 1v6M7.300 4.800l2.700 2.600 2.700-2.600" /></svg>
            <MdStarBorder size={18} />
          </OmniRight>
        </Omnibox>
        <ExtIcons>
          <svg width="18" height="18" viewBox="0 0 18 18">
            <path d="M2 17c0-4 1-5 1-8C3 5 6 3 9 1c3 2 6 4 6 8 0 3 1 4 1 8z" fill="#1d5c73" />
            <path d="M6 14h6v4H6z" fill="#0e2a3a" />
            <g fill="#fff" stroke="#e8603c" strokeWidth="1.5"><circle cx="6" cy="9.500" r="2.400" /><circle cx="12" cy="9.500" r="2.400" /></g>
            <circle cx="6" cy="9.500" r=".8" fill="#333" /><circle cx="12" cy="9.500" r=".8" fill="#333" />
          </svg>
          <ExtSlot $ml={7}>
            <svg width="16" height="16" viewBox="0 0 16 16" fill="none" stroke="#1b1b1b" strokeWidth="1.4"><path d="M5.500 1C2.500 1 5 7 1.500 8 5 9 2.500 15 5.500 15M10.500 1c3 0 .5 6 4 7-3.500 1-1 7-4 7" /></svg>
          </ExtSlot>
          <ExtSlot><MdExtension size={17} color="#fff" /></ExtSlot>
          <ExtSlot>
            <svg width="22" height="22" viewBox="0 0 22 22"><circle cx="11" cy="11" r="11" fill="#07100b" /><path d="M8 5c3-2 6 0 5.500 4-.4 3-1.500 4-2.500 4S8.500 10 8 8z" fill="#b08c63" /><path d="M7.500 6C7.500 2 14 2 14 6.500L12.500 5z" fill="#1c140e" /></svg>
          </ExtSlot>
          <ExtSlot><MdMoreVert size={20} color="#fff" /></ExtSlot>
        </ExtIcons>
      </Toolbar>
      <Bookmarks>
        {bookmarks.map(([Icon, text, w]) => (
          <Bookmark key={text}>
            <StripGap $w={16}><Icon /></StripGap>
            <Label w={w}>{text}</Label>
          </Bookmark>
        ))}
        <BookmarkEnd>
          <svg width="9" height="9" viewBox="0 0 9 9" fill="none" stroke="#fff" strokeWidth="1.5"><path d="M1 1l3 3.500L1 8M5 1l3 3.500L5 8" /></svg>
          <BarEdge />
          <Bookmark>
            <svg width="17" height="17" viewBox="0 0 17 17"><path d="M3 3.500h12.200v12H3z" fill="none" stroke="#fff" strokeWidth="1.5" /><path d="M5 6.500h2M8 6.500h5.500M5 9.500h2M8 9.500h5.500M5 12.500h2M8 12.500h5.500" stroke="#fff" strokeWidth="1.5" /><circle cx="3.500" cy="3.500" r="3.200" fill="#e00b0b" /></svg>
            <Label w={80}>Reading list</Label>
          </Bookmark>
        </BookmarkEnd>
      </Bookmarks>
    </>
  );
}

function EditorTools() {
  return (
    <ToolRow>
      <Tool $ml={17} $w={22}>
        <svg width="22" height="22" viewBox="0 0 22 22" fill="none" stroke="#444" strokeWidth="1.5"><path d="M13.5 6.5h7v14h-7z" fill="#bbb" stroke="none" /><path d="M1 1h20v20H1zM1 6.500h20M13.5 6.500V21" /></svg>
      </Tool>
      <Caret $ml={6.5} />
      <Sep $ml={16.5} />
      <ZoomText>100%</ZoomText>
      <Caret $ml={7.5} />
      <Sep $ml={16} />
      <Tool $ml={14.5} $w={26}><MdZoomIn size={26} /></Tool>
      <Tool $ml={12} $w={26}><MdZoomOut size={26} /></Tool>
      <Sep $ml={12.5} />
      <Tool $ml={14.5} $w={23}><MdUndo size={23} /></Tool>
      <Tool $ml={15} $w={23} $off><MdRedo size={23} /></Tool>
      <Sep $ml={14} />
      <Tool $ml={19} $w={18} $off>
        <svg width="18" height="20" viewBox="0 0 18 20" fill="currentColor"><path d="M.5 2H5l1.300-1.500h5.400L13 2h4.500v2.300H.5zM2 6h14v11.500a2 2 0 0 1-2 2H4a2 2 0 0 1-2-2z" /></svg>
      </Tool>
      <Sep $ml={16} />
      <Tool $ml={17} $w={20} $off>
        <svg width="20" height="20" viewBox="0 0 20 20" fill="none" stroke="currentColor" strokeWidth="1.5"><path d="M1 7V1h6M19 13v6h-6" /><path d="M4.500 4h11v11h-11z" fill="currentColor" stroke="none" /></svg>
      </Tool>
      <Tool $ml={17} $w={20} $off>
        <svg width="20" height="20" viewBox="0 0 20 20" fill="none" stroke="currentColor" strokeWidth="1.5"><path d="M1 1h8v8H1zM11 11h8v8h-8z" /><path d="M10.500 4.500H15V9.500h-5zM5 10.500h4.500V15H5z" fill="currentColor" stroke="none" /></svg>
      </Tool>
      <Sep $ml={16} />
      <Tool $ml={17} $w={21} $off>
        <svg width="21" height="20" viewBox="0 0 21 20" fill="currentColor"><path d="M5.500 0 4.300 1.200l2.300 2.300L.8 9.300a1.400 1.400 0 0 0 0 2l6 6a1.400 1.400 0 0 0 2 0l7-7zM7.800 5 12.500 9.800H3z" fillRule="evenodd" /><path d="M18.500 12s-2.200 2.600-2.200 4.200a2.200 2.200 0 0 0 4.400 0c0-1.600-2.200-4.200-2.200-4.200z" /></svg>
      </Tool>
      <Tool $ml={13} $w={26} $off>
        <svg width="26" height="24" viewBox="0 0 26 24" fill="currentColor"><path d="M6 14.500 15 5.500l3.700 3.700-5.500 5.300zM16 4.500 18.500 2l3.700 3.700-2.500 2.500zM0 19.500h26V24H0z" /><path d="M16.500 14.200h6" stroke="currentColor" /></svg>
      </Tool>
      <Tool $ml={17} $w={19} $off>
        <svg width="19" height="19" viewBox="0 0 19 19"><path d="M4 4h15v15H4z" fill="#d5d5d5" /><path d="M1 1h14v14H1z" fill="#fbfbfb" stroke="#c6c6c6" strokeWidth="2" /></svg>
      </Tool>
      <Sep $ml={15} />
      <Tool $ml={18} $w={19}>
        <svg width="19" height="9" viewBox="0 0 19 9"><path d="M0 4.500h14" stroke="#666" strokeWidth="1.5" /><path d="M13.500 .8 18.800 4.500 13.500 8.200z" fill="#666" /></svg>
      </Tool>
      <Caret $ml={5.5} $c="#b9b9b9" />
      <Tool $ml={19.5} $w={19}>
        <svg width="19" height="20" viewBox="0 0 19 20" fill="none" stroke="#666" strokeWidth="1.3"><path d="M2.500 16V10.500h14V4M1 16h3v3H1zM15 1h3v3h-3z" /></svg>
      </Tool>
      <Caret $ml={6} $c="#b9b9b9" />
      <Sep $ml={16.5} />
      <Tool $ml={17.5} $w={17}>
        <svg width="17" height="17" viewBox="0 0 17 17"><path d="M8.500 0v17M0 8.500h17" stroke="#000" strokeWidth="3.4" /></svg>
      </Tool>
      <Caret $ml={8.5} />
      <Sep $ml={15.5} />
      <Tool $ml={15.5} $w={17}>
        <svg width="17" height="17" viewBox="0 0 17 17" fill="none" stroke="#666" strokeWidth="1.2"><path d="M.7.7h15.600v15.600H.7zM.7 5.900h15.600M.7 11.100h15.600M5.900.7v15.600M11.100.7v15.600" /></svg>
      </Tool>
      <Caret $ml={8.5} $c="#b9b9b9" />
      <ToolEnd>
        <svg width="16" height="16" viewBox="0 0 16 16" fill="none" stroke="#5f5f5f" strokeWidth="2"><path d="M1 5V1h4M11 1h4v4M15 11v4h-4M5 15H1v-4" /><path d="M5.500 5.500h5v5h-5z" fill="#5f5f5f" stroke="none" /></svg>
        <svg width="14" height="14" viewBox="0 0 14 14" fill="none" stroke="#666" strokeWidth="1.3"><path d="M.7.7h12.600v12.600H.7zM8.700.7v12.600" /></svg>
        <svg width="15" height="14" viewBox="0 0 15 14" fill="none" stroke="#5f5f5f" strokeWidth="1.8"><path d="M1.500 1l6 5 6-5M1.500 7.500l6 5 6-5" /></svg>
      </ToolEnd>
    </ToolRow>
  );
}

export default function App() {
  return (
    <Desktop>
      <Global />
      <TopBar>
        <TopLeft>
          <Label w={62}>Activities</Label>
          <TopGap $w={35} />
          <ChromeGlyph size={15} mono />
          <TopGap $w={7} />
          <Label w={104}>Google Chrome</Label>
          <Caret $s={9} $c="#eee" $ml={6} />
        </TopLeft>
        <Label w={88}>{"Aug 24  15:21"}</Label>
        <Tray>
          <svg width="16" height="13" viewBox="0 0 16 13"><path d="M0 3.500Q8-3 16 3.500L8 13z" fill="#fff" /></svg>
          <svg width="15" height="15" viewBox="0 0 15 15" fill="none" stroke="#777"><path d="M1 5h3l4-4v12l-4-4H1z" fill="#777" /><path d="M9.500 4.500q2 3 0 6M12 3q3 4.500 0 9M1 14 13 1" strokeWidth="1.3" /></svg>
          <svg width="15" height="15" viewBox="0 0 15 15"><path d="M3 3.500 0 8.500h2L1.300 12l3-5H2.600z" fill="#fff" /><path d="M6.700 2.200h7v12h-7zM8.700 1h3" fill="none" stroke="#fff" strokeWidth="1.3" /><path d="M8 11h4.500v2H8z" fill="#fff" /></svg>
          <Caret $s={10} $c="#eee" />
        </Tray>
      </TopBar>
      <Below>
        <Dock>
          <WallpaperArt />
          <Slot><Dots><Dot /></Dots><FilesIcon /></Slot>
          <Slot $active><Dots><Dot /></Dots><ChromeGlyph size={45} /></Slot>
          <Slot $lift={2}><FirefoxIcon /></Slot>
          <Slot><CodeIcon /></Slot>
          <Slot $lift={7}><SoftwareIcon /></Slot>
          <Slot><Dots><Dot /><Dot /><Dot /></Dots><ReaderIcon /></Slot>
          <AppsGrid>
            {Array.from({ length: 9 }, (_, i) => <AppsDot key={i} />)}
          </AppsGrid>
        </Dock>
        <Window>
          <BrowserChrome />
          <Editor>
            <MenuBar>
              {["File", "Edit", "View", "Arrange", "Extras", "Help"].map((m) => <MenuItem key={m}>{m}</MenuItem>)}
              <SaveBanner>
                <Label w={251}>Unsaved changes. Click here to save.</Label>
                <svg width="16" height="16" viewBox="0 0 16 16" fill="none" stroke="#473d28" strokeWidth="1.7"><path d="M1 7v8h14V7M8 0v10.500M4 7l4 4 4-4" /></svg>
              </SaveBanner>
              <GlobeSlot><MdLanguage size={24} /></GlobeSlot>
            </MenuBar>
            <EditorTools />
            <Work>
              <Sidebar>
                <SideScroll>
                  <SideList>
                    <DropZone><DropBox>Drag elements here</DropBox></DropZone>
                    <Section $h={43} $open><Caret $c="#999" $s={10} />General</Section>
                    <Palette>
                      {shapes.map((s, i) => <Shape key={i}>{s}</Shape>)}
                    </Palette>
                    {sections.map(([name, h], i) => (
                      <Section key={name} $h={h} $last={i === 6}><SideArrow />{name}</Section>
                    ))}
                  </SideList>
                  <ScrollTrack><ScrollThumb /></ScrollTrack>
                </SideScroll>
                <MoreShapes>
                  <PlusSlot>
                    <svg width="12" height="12" viewBox="0 0 12 12"><path d="M6 0v12M0 6h12" stroke="#e37200" strokeWidth="2" /></svg>
                  </PlusSlot>
                  More Shapes...
                </MoreShapes>
              </Sidebar>
              <Splitter><Grip /><Grip /></Splitter>
              <Stage>
                <Canvas>
                  <Page />
                  <PageBreak />
                  <BoxNode $x={307.5} $y={105} $w={263.5} $align="center">{"Piece Selection Algorithm\n\nFixed Chunk size (512 bytes)"}</BoxNode>
                  <FileTable x={84} rows={[["1", "S1 S2"], ["2", "S1"], ["3", "S2 S3"]]} />
                  <FileTable x={524} rows={[["2", "S1"], ["1", "S1 S2"], ["3", "S2 S3"]]} />
                  <Node $x={321} $y={369} $w={200} $align="center">{"After sorting on the basis\nof Numbers of seeders"}</Node>
                  <ArrowNode width="164" height="16" viewBox="0 0 164 16">
                    <path d="M1 8.500h154" stroke="#000" strokeWidth="1.25" />
                    <path d="M163 8.500 151 2.700l3 5.800-3 5.800z" />
                  </ArrowNode>
                  <Node $x={265} $y={522} $w={300} $align="center">{"Final allocated seeders for every chunk\n\n(S1-2) --> (S2-1) --> (S3-3)"}</Node>
                  <Node $x={845.5} $y={137} $w={420}>
                    <AlgoTitle>Algo:</AlgoTitle>
                    {algo}
                  </Node>
                  <Node $x={850} $y={509} $w={440}>Note: If any chunk is not available, we will not initiate download</Node>
                  <VThumb />
                  <HThumb />
                </Canvas>
                <PageTabs>
                  <PageMenu><MenuDot /><MenuDot /><MenuDot /></PageMenu>
                  <PageTab>Page-1</PageTab>
                  <AddPage>
                    <svg width="17" height="17" viewBox="0 0 17 17"><path d="M8.500 0v17M0 8.500h17" stroke="#8c8c8c" strokeWidth="3.2" /></svg>
                  </AddPage>
                </PageTabs>
              </Stage>
            </Work>
          </Editor>
        </Window>
      </Below>
    </Desktop>
  );
}
